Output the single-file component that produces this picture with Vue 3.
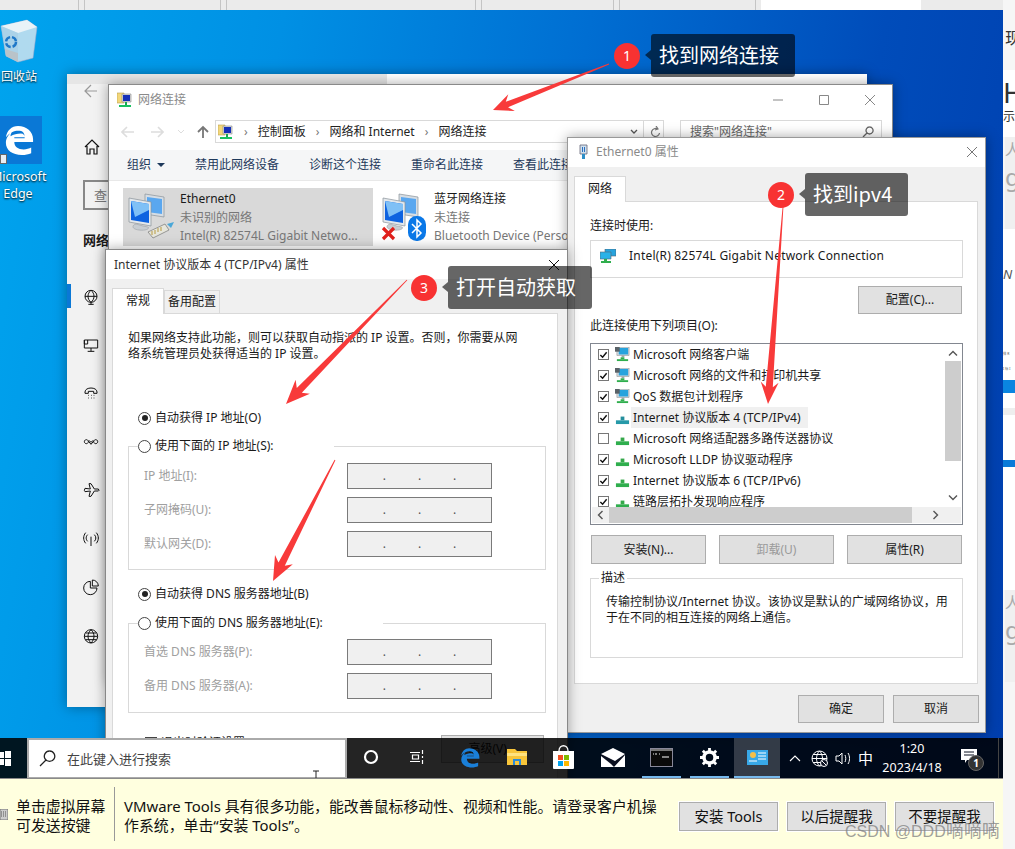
<script setup>
// 箭头：从尾到尖的多边形
function arrow(x1, y1, x2, y2, head = 20, half = 10, shaft = 3) {
  const len = Math.hypot(x2 - x1, y2 - y1);
  const ux = (x2 - x1) / len;
  const uy = (y2 - y1) / len;
  const nx = -uy;
  const ny = ux;
  const at = (back, side) => {
    const x = x2 - ux * back + nx * side;
    const y = y2 - uy * back + ny * side;
    return x.toFixed(1) + ',' + y.toFixed(1);
  };
  return [
    at(len, 0.4), at(head - 5, shaft), at(head, half), at(0, 0),
    at(head, -half), at(head - 5, -shaft), at(len, -0.4)
  ].join(' ');
}

const arrows = [
  arrow(609, 64, 493, 110, 20, 9, 3),
  arrow(783, 207, 768, 404, 22, 9, 3.5),
  arrow(407, 280, 286, 404, 24, 10, 3.5),
  arrow(335, 460, 273, 581, 24, 10, 3.5)
];

const tabMarks = [78, 84, 220, 226, 475, 481, 613, 619, 755];

const settingsIcons = [
  'M4 14a9 9 0 1 1 18 0a9 9 0 0 1-18 0M4 14h18M13 5c-6 5-6 13 0 18M13 5c6 5 6 13 0 18M13 23v3M9 26h8',
  'M3 6h20v12H3zM3 6v6h5v-6M13 18v5M8 23h10',
  'M4 12c0-8 18-8 18 0v2h-5v-3H9v3H4zM9 17h1M13 17h1M17 17h1M9 21h1M13 21h1M17 21h1',
  'M6 10a3 3 0 1 0 .1 0M20 10a3 3 0 1 0 .1 0M9 12l4 5l4-5M13 14l-3-3M13 14l3-3',
  'M4 11l8 1l-2-8h3l5 8h6l1 2l-1 1h-6l-5 8h-3l2-8l-8 1l-1-2z',
  'M13 10v14M8 7c-3 3-3 7 0 10M18 7c3 3 3 7 0 10M5 4c-4 5-4 11 0 16M21 4c4 5 4 11 0 16',
  'M12 5a10 10 0 1 0 10 10H12zM15 3v9h9a9 9 0 0 0-9-9',
  'M3 14a10 10 0 1 0 20 0a10 10 0 0 0-20 0M3 14h20M5 9h16M5 19h16M13 4c-6 6-6 14 0 20M13 4c6 6 6 14 0 20'
];

const toolItems = ['禁用此网络设备', '诊断这个连接', '重命名此连接', '查看此连接状态'];

const netItems = [
  { name: 'Microsoft 网络客户端', on: true, icon: 'pc' },
  { name: 'Microsoft 网络的文件和打印机共享', on: true, icon: 'pc' },
  { name: 'QoS 数据包计划程序', on: true, icon: 'pc' },
  { name: 'Internet 协议版本 4 (TCP/IPv4)', on: true, icon: 'teal', hi: true },
  { name: 'Microsoft 网络适配器多路传送器协议', on: false, icon: 'green' },
  { name: 'Microsoft LLDP 协议驱动程序', on: true, icon: 'green' },
  { name: 'Internet 协议版本 6 (TCP/IPv6)', on: true, icon: 'green' },
  { name: '链路层拓扑发现响应程序', on: true, icon: 'green' }
];

const ipFields = ['IP 地址(I):', '子网掩码(U):', '默认网关(D):'];
const dnsFields = ['首选 DNS 服务器(P):', '备用 DNS 服务器(A):'];
</script>

<template>
  <div class="screen">
    <svg class="defs" width="0" height="0">
      <symbol id="netfolder" viewBox="0 0 16 16">
        <path d="M0 1h7v10H0z" fill="#f3d77a" stroke="#b9a050" stroke-width=".6" />
        <path d="M5 2h9v8H5z" fill="#ddd" stroke="#888" stroke-width=".6" />
        <path d="M6 3h7v6H6z" fill="#1530b8" />
        <path d="M8 10h2v3H8z" fill="#18a850" />
        <path d="M2 13h12v2H2z" fill="#18c060" />
      </symbol>
      <symbol id="monitors" viewBox="0 0 45 42">
        <path d="M18 1l19 3v20l-19-3z" fill="#d6dde4" stroke="#8a9299" stroke-width=".7" />
        <path d="M20 4l15 2v15l-15-2z" fill="#5aa7ef" />
        <path d="M2 5l22 4v24L2 29z" fill="#e4e8ec" stroke="#8a9299" stroke-width=".7" />
        <path d="M4 8l18 3v19L4 27z" fill="#0e63e0" />
        <path d="M4 8l18 3v6L8 24z" fill="#7fc0f6" />
        <path d="M9 31c-4 1-5 5 3 6s11-2 9-3l-5-1z" fill="#c8cdd2" stroke="#9aa0a5" stroke-width=".6" />
      </symbol>
      <symbol id="edge-e" viewBox="0 0 32 32">
        <path fill="currentColor" d="M15 1c9 0 16 6 16 14v3H11c0 5 4 8 10 8c3 0 6-1 8-2v6c-3 1-6 2-10 2C9 32 2 27 2 19C2 14 5 10 9 7c-2 2-2 4-2 5c3-2 7-3 11-3c3 0 4 2 4 4H11c0 0 0 1 0 1h11v-1c0-5-2-7-7-7c-4 0-9 2-13 7C3 6 8 1 15 1z" />
      </symbol>
      <symbol id="nic-green" viewBox="0 0 16 16">
        <path d="M6 7h4v4H6z" fill="#35a84a" />
        <path d="M1 11h14v4H1z" fill="#2fae4d" />
      </symbol>
      <symbol id="nic-teal" viewBox="0 0 16 16">
        <path d="M6 7h4v4H6z" fill="#258f9d" />
        <path d="M1 11h14v4H1z" fill="#2699a8" />
      </symbol>
      <symbol id="nic-pc" viewBox="0 0 16 16">
        <path d="M2 0h13v9H2z" fill="#d8dde2" stroke="#777" stroke-width=".5" />
        <path d="M4 1h10v7H4z" fill="#27a3dd" />
        <path d="M0 0h5v5H0z" fill="#5a6268" />
        <path d="M7 9h3v2H7z" fill="#9aa" />
        <path d="M6 11h4v2H6z" fill="#2fae4d" />
        <path d="M2 13h12v2H2z" fill="#2fae4d" />
      </symbol>
    </svg>

    <div class="main">
      <div class="tabstrip">
        <i v-for="x in tabMarks" :key="x" class="tabmark" :style="{ left: x + 'px' }"></i>
        <div class="tabactive"></div>
      </div>

      <div class="desk">
        <!-- 桌面图标 -->
        <div class="deskicon bin">
          <svg width="38" height="44" viewBox="0 0 38 44">
            <path d="M1 7l26-6l10 7l-4 31l-15 4L6 37z" fill="#cfe4ee" fill-opacity=".85" stroke="#aac" stroke-width=".5" />
            <path d="M1 7l17 7l19-6l-10-7z" fill="#e9f3f8" />
            <path d="M18 14v29L6 37L1 7z" fill="#a8cfe6" fill-opacity=".7" />
            <path d="M5 30l13 4v9L6 37z" fill="#b9c3c9" />
            <circle cx="11" cy="23" r="5" fill="none" stroke="#1f78c8" stroke-width="2.4" stroke-dasharray="6 2" />
          </svg>
          <span>回收站</span>
        </div>
        <div class="deskicon edge">
          <div class="edgebox">
            <svg class="edgelogo" width="30" height="32"><use href="#edge-e" /></svg>
            <i class="shortcut"></i>
          </div>
          <span class="edgename">Microsoft<br />Edge</span>
        </div>

        <!-- 设置窗口 -->
        <section class="win settings">
          <div class="set-top">
            <svg class="set-back" width="14" height="14" viewBox="0 0 14 14"><path d="M13 7H1M7 1L1 7l6 6" fill="none" stroke="#999" stroke-width="1.2" /></svg>
          </div>
          <div class="set-side">
            <svg class="set-home" width="16" height="16" viewBox="0 0 16 16"><path d="M1 8l7-7l7 7M3 7v8h3v-5h4v5h3V7" fill="none" stroke="#111" stroke-width="1.2" /></svg>
            <div class="set-search">查</div>
            <div class="set-head">网络</div>
            <div class="set-icons">
              <div v-for="(d, i) in settingsIcons" :key="i" class="set-item" :class="{ on: i === 0 }">
                <svg width="18" height="18" viewBox="0 0 26 27"><path :d="d" fill="none" stroke="#111" stroke-width="1.5" /></svg>
              </div>
            </div>
          </div>
        </section>

        <!-- 网络连接窗口 -->
        <section class="win netconn">
          <header class="nc-title">
            <svg width="16" height="16"><use href="#netfolder" /></svg>
            <span class="nc-name">网络连接</span>
            <span class="caps">
              <svg width="12" height="12" viewBox="0 0 12 12"><path d="M1 6h10" stroke="#888" /></svg>
              <svg width="12" height="12" viewBox="0 0 12 12"><path d="M1.5 1.5h9v9h-9z" fill="none" stroke="#888" /></svg>
              <svg width="12" height="12" viewBox="0 0 12 12"><path d="M1 1l10 10M11 1L1 11" stroke="#888" /></svg>
            </span>
          </header>
          <div class="nc-nav">
            <span class="nc-arrows">
              <svg width="14" height="12" viewBox="0 0 14 12"><path d="M13 6H1M6 1L1 6l5 5" fill="none" stroke="#ddd" stroke-width="1.6" /></svg>
              <svg width="14" height="12" viewBox="0 0 14 12"><path d="M1 6h12M8 1l5 5l-5 5" fill="none" stroke="#ddd" stroke-width="1.6" /></svg>
              <svg class="nav-dd" width="8" height="6" viewBox="0 0 8 6"><path d="M1 1l3 3l3-3" fill="none" stroke="#ddd" /></svg>
              <svg class="nav-up" width="12" height="14" viewBox="0 0 12 14"><path d="M6 13V2M1 7l5-5l5 5" fill="none" stroke="#777" stroke-width="1.8" /></svg>
            </span>
            <div class="nc-addr">
              <svg width="16" height="16"><use href="#netfolder" /></svg>
              <span class="crumb">›</span><span>控制面板</span>
              <span class="crumb">›</span><span>网络和 Internet</span>
              <span class="crumb">›</span><span>网络连接</span>
              <span class="addr-end">
                <svg width="8" height="6" viewBox="0 0 8 6"><path d="M1 1l3 3l3-3" fill="none" stroke="#555" stroke-width="1.3" /></svg>
                <i class="addr-sep"></i>
                <svg width="11" height="12" viewBox="0 0 11 12"><path d="M9.5 7a4 4 0 1 1-2-4M6 0l2 3l-3 1" fill="none" stroke="#777" stroke-width="1.2" /></svg>
              </span>
            </div>
            <div class="nc-find">
              <span>搜索"网络连接"</span>
              <svg width="12" height="12" viewBox="0 0 12 12"><path d="M7.5 1a3.5 3.5 0 1 0 .1 0M5 7l-4 4" fill="none" stroke="#666" stroke-width="1.3" /></svg>
            </div>
          </div>
          <div class="nc-tools">
            <span class="org">组织<i class="caret"></i></span>
            <span v-for="t in toolItems" :key="t">{{ t }}</span>
          </div>
          <div class="nc-list">
            <div class="conn sel">
              <span class="conn-icon">
                <svg width="45" height="42"><use href="#monitors" /></svg>
                <svg class="plug" width="28" height="18" viewBox="0 0 28 18">
                  <path d="M1 11l17-8l4 6l-16 8z" fill="#e6e6dc" stroke="#777" stroke-width=".7" />
                  <path d="M20 3l7-2l-3 6z" fill="#49a7d8" />
                  <path d="M5 10v4M8 9v4M11 7v4M14 6v4" stroke="#b89a40" />
                </svg>
              </span>
              <div class="conn-text">
                <b>Ethernet0</b>
                <span>未识别的网络</span>
                <span>Intel(R) 82574L Gigabit Netwo...</span>
              </div>
            </div>
            <div class="conn">
              <span class="conn-icon">
                <svg width="45" height="42"><use href="#monitors" /></svg>
                <svg class="xmark" width="15" height="15" viewBox="0 0 15 15"><path d="M2 2l11 11M13 2L2 13" stroke="#e0201c" stroke-width="3.2" /></svg>
                <svg class="bt" width="18" height="25" viewBox="0 0 18 25">
                  <rect width="18" height="25" rx="8.5" fill="#0a78e8" />
                  <path d="M4 8l9 9l-4 4V4l4 4l-9 9" fill="none" stroke="#fff" stroke-width="1.5" />
                </svg>
              </span>
              <div class="conn-text">
                <b>蓝牙网络连接</b>
                <span>未连接</span>
                <span>Bluetooth Device (Personal Area Network)</span>
              </div>
            </div>
          </div>
        </section>

        <!-- Ethernet0 属性 -->
        <section class="win ethdlg">
          <header class="dlg-title">
            <svg width="11" height="16" viewBox="0 0 11 16">
              <path d="M2 1h7v9H2z" fill="#cfe0ee" stroke="#667" stroke-width=".8" />
              <path d="M4 3h1v5H4zM6 3h1v5H6z" fill="#2a6fc0" />
              <path d="M4 10h3v5H4z" fill="#2f8fc8" />
            </svg>
            <span class="grey">Ethernet0 属性</span>
            <svg class="dlg-x" width="12" height="12" viewBox="0 0 12 12"><path d="M1 1l10 10M11 1L1 11" stroke="#777" /></svg>
          </header>
          <div class="dlg-body">
            <div class="tabs"><span class="tab on eth-tab">网络</span></div>
            <div class="panel eth-panel">
              <div class="label">连接时使用:</div>
              <div class="adapter">
                <svg width="16" height="15" viewBox="0 0 16 15">
                  <path d="M5 0h11v7H5z" fill="#27a3dd" stroke="#567" stroke-width=".6" />
                  <path d="M0 3h11v7H0z" fill="#2ab2e8" stroke="#567" stroke-width=".6" />
                  <path d="M4 10h3v2H4z" fill="#2fae4d" />
                  <path d="M1 12h10v2H1z" fill="#2fae4d" />
                </svg>
                <span>Intel(R) 82574L Gigabit Network Connection</span>
              </div>
              <div class="cfg-row"><button class="btn cfg">配置(C)...</button></div>
              <div class="label list-label">此连接使用下列项目(O):</div>
              <div class="listbox">
                <div class="rows">
                  <div v-for="item in netItems" :key="item.name" class="row">
                    <span class="check">
                      <svg v-if="item.on" width="10" height="10" viewBox="0 0 10 10"><path d="M1.5 5l2.5 2.5L8.5 2" fill="none" stroke="#111" stroke-width="1.6" /></svg>
                    </span>
                    <svg width="15" height="15"><use :href="'#nic-' + item.icon" /></svg>
                    <span class="row-name" :class="{ hi: item.hi }">{{ item.name }}</span>
                  </div>
                </div>
                <div class="vscroll">
                  <svg width="10" height="7" viewBox="0 0 10 7"><path d="M1 5.5l4-4l4 4" fill="none" stroke="#555" stroke-width="1.4" /></svg>
                  <i class="vthumb"></i>
                  <svg class="vdown" width="10" height="7" viewBox="0 0 10 7"><path d="M1 1.5l4 4l4-4" fill="none" stroke="#555" stroke-width="1.4" /></svg>
                </div>
                <div class="hscroll">
                  <svg width="7" height="10" viewBox="0 0 7 10"><path d="M5.5 1l-4 4l4 4" fill="none" stroke="#555" stroke-width="1.4" /></svg>
                  <i class="hthumb"></i>
                  <svg width="7" height="10" viewBox="0 0 7 10"><path d="M1.5 1l4 4l-4 4" fill="none" stroke="#555" stroke-width="1.4" /></svg>
                </div>
              </div>
              <div class="act-row">
                <button class="btn act">安装(N)...</button>
                <button class="btn act off">卸载(U)</button>
                <button class="btn act">属性(R)</button>
              </div>
              <fieldset class="desc">
                <legend>描述</legend>
                <p>传输控制协议/Internet 协议。该协议是默认的广域网络协议，用<br />于在不同的相互连接的网络上通信。</p>
              </fieldset>
            </div>
            <div class="dlg-foot">
              <button class="btn foot">确定</button>
              <button class="btn foot">取消</button>
            </div>
          </div>
        </section>

        <!-- IPv4 属性 -->
        <section class="win ipv4">
          <header class="dlg-title">
            <span class="ipv4-name">Internet 协议版本 4 (TCP/IPv4) 属性</span>
            <svg class="dlg-x" width="12" height="12" viewBox="0 0 12 12"><path d="M1 1l10 10M11 1L1 11" stroke="#111" /></svg>
          </header>
          <div class="dlg-body ipv4-body">
            <div class="tabs">
              <span class="tab on gen-tab">常规</span>
              <span class="tab alt-tab">备用配置</span>
            </div>
            <div class="panel ip-panel">
              <p class="intro">如果网络支持此功能，则可以获取自动指派的 IP 设置。否则，你需要从网<br />络系统管理员处获得适当的 IP 设置。</p>
              <div class="radio first"><i class="dot on"></i>自动获得 IP 地址(O)</div>
              <fieldset class="grp ip-grp">
                <legend class="radio leg"><i class="dot"></i>使用下面的 IP 地址(S):</legend>
                <div v-for="f in ipFields" :key="f" class="field-row">
                  <span>{{ f }}</span>
                  <div class="ipbox"><span>.</span><span>.</span><span>.</span></div>
                </div>
              </fieldset>
              <div class="radio second"><i class="dot on"></i>自动获得 DNS 服务器地址(B)</div>
              <fieldset class="grp dns-grp">
                <legend class="radio leg"><i class="dot"></i>使用下面的 DNS 服务器地址(E):</legend>
                <div v-for="f in dnsFields" :key="f" class="field-row">
                  <span>{{ f }}</span>
                  <div class="ipbox"><span>.</span><span>.</span><span>.</span></div>
                </div>
              </fieldset>
              <div class="ip-foot">
                <span class="verify"><i class="box"></i>退出时验证设置</span>
                <button class="btn adv">高级(V)...</button>
              </div>
            </div>
          </div>
        </section>

        <!-- 任务栏 -->
        <footer class="taskbar">
          <svg class="winlogo" width="11" height="15" viewBox="0 0 11 15"><path d="M0 1h4v6H0zM5 0h6v7H5zM0 8h4v6H0zM5 8h6v7H5z" fill="#fff" /></svg>
          <div class="tb-search">
            <svg width="17" height="17" viewBox="0 0 17 17"><path d="M10.5 1a5.2 5.2 0 1 0 .1 0M7 10l-6 6" fill="none" stroke="#222" stroke-width="1.3" /></svg>
            <span>在此键入进行搜索</span>
            <svg class="ibeam" width="8" height="12" viewBox="0 0 8 12"><path d="M1 1h6M4 1v10" stroke="#222" /></svg>
          </div>
          <div class="tb-apps">
            <span class="app a-cortana"><svg width="16" height="16" viewBox="0 0 16 16"><circle cx="8" cy="8" r="6" fill="none" stroke="#fff" stroke-width="2.2" /></svg></span>
            <span class="app a-view"><svg width="16" height="16" viewBox="0 0 16 16"><path d="M0 3.5h10M0 12.5h10M2.5 6h6v4h-6zM12.5 1v4M12.5 7v2M12.5 11v4" fill="none" stroke="#fff" stroke-width="1.2" /></svg></span>
            <span class="app a-edge"><svg width="20" height="21"><use href="#edge-e" /></svg></span>
            <span class="app a-folder">
              <svg width="20" height="18" viewBox="0 0 20 18">
                <path d="M0 1h8l2 2h10v14H0z" fill="#f8c53a" />
                <path d="M0 5h20v3H0z" fill="#ffe27f" />
                <path d="M6 11h8v6h-2v-4H8v4H6z" fill="#2a8ad8" />
              </svg>
            </span>
            <span class="app a-store">
              <svg width="23" height="24" viewBox="0 0 23 24">
                <path d="M7 6c0-7 9-7 9 0" fill="none" stroke="#fff" stroke-width="1.3" />
                <path d="M1 6h21v17a1 1 0 0 1-1 1H2a1 1 0 0 1-1-1z" fill="#fff" />
                <path d="M6 10h5v5H6z" fill="#f25022" /><path d="M12 10h5v5h-5z" fill="#7fba00" />
                <path d="M6 16h5v5H6z" fill="#00a4ef" /><path d="M12 16h5v5h-5z" fill="#ffb900" />
              </svg>
            </span>
            <span class="app a-mail">
              <svg width="24" height="19" viewBox="0 0 24 19">
                <path d="M0 6L12 0l12 6v13H0z" fill="#fff" />
                <path d="M0 6l14 7l10-7v1L13 19l-3-3L0 8z" fill="#0a1020" />
              </svg>
            </span>
            <span class="app a-cmd run">
              <svg width="23" height="19" viewBox="0 0 23 19">
                <rect x=".5" y=".5" width="22" height="18" fill="#0a0a0a" stroke="#889" />
                <path d="M1 1h21v2H1z" fill="#777" />
                <path d="M3 6h1M5 6h2M9 6h1" stroke="#eee" /><path d="M12 9h7" stroke="#fff" />
              </svg>
            </span>
            <span class="app a-gear run">
              <svg width="19" height="19" viewBox="0 0 19 19">
                <circle cx="9.5" cy="9.5" r="5.5" fill="none" stroke="#fff" stroke-width="3.5" />
                <path d="M9.5 0v4M9.5 15v4M0 9.5h4M15 9.500h4M2.8 2.800l2.800 2.800M13.400 13.400l2.800 2.800M2.800 16.200l2.800-2.800M13.400 5.600l2.800-2.800" stroke="#fff" stroke-width="2.8" />
              </svg>
            </span>
            <span class="app a-panel run active">
              <svg width="21" height="15" viewBox="0 0 21 15">
                <rect width="21" height="15" fill="#38a8e8" />
                <circle cx="6" cy="5" r="3" fill="#f4c04a" />
                <path d="M11 3h8M11 6h8M11 9h8" stroke="#fff" /><path d="M2 11h8" stroke="#fff" />
              </svg>
            </span>
          </div>
          <div class="tray">
            <svg class="t-up" width="12" height="8" viewBox="0 0 12 8"><path d="M1 7l5-5l5 5" fill="none" stroke="#fff" stroke-width="1.1" /></svg>
            <svg class="t-globe" width="17" height="17" viewBox="0 0 17 17">
              <path d="M1 8.5a7.5 7.5 0 1 0 15 0a7.5 7.5 0 0 0-15 0M1 8.5h15M2 4.5h13M2 12.500h13M8.500 1c-4 4-4 11 0 15M8.500 1c4 4 4 11 0 15" fill="none" stroke="#fff" />
              <circle cx="13" cy="13" r="3.500" fill="#0a1020" stroke="#fff" /><path d="M11 11l4 4" stroke="#fff" />
            </svg>
            <svg class="t-vol" width="17" height="15" viewBox="0 0 17 15"><path d="M1 5h3l3-3v11l-3-3H1zM10 4c1 2 1 5 0 7M13 2c2 3 2 8 0 11" fill="none" stroke="#fff" /></svg>
            <span class="ime">中</span>
            <div class="clock"><span>1:20</span><span>2023/4/18</span></div>
            <span class="notify">
              <svg width="16" height="14" viewBox="0 0 16 14"><path d="M0 0h16v11H6l-2 3v-3H0z" fill="#fff" /><path d="M3 3h10M3 6h10" stroke="#0a1020" /></svg>
              <b class="notify-n">1</b>
            </span>
            <i class="show-desk"></i>
          </div>
        </footer>
      </div>

      <!-- VMware 提示条 -->
      <div class="vmbar">
        <svg class="vm-key" width="8" height="11" viewBox="0 0 8 11"><path d="M0 0h8v11H0z" fill="#ccc" stroke="#777" /><path d="M1 3h6M1 5h6M1 7h6" stroke="#555" stroke-dasharray="1 1" /></svg>
        <div class="vm-left">单击虚拟屏幕<br />可发送按键</div>
        <i class="vm-sep"></i>
        <div class="vm-msg">VMware Tools 具有很多功能，能改善鼠标移动性、视频和性能。请登录客户机操<br />作系统，单击“安装 Tools”。</div>
        <div class="vm-btns">
          <button class="vm-btn">安装 Tools</button>
          <button class="vm-btn">以后提醒我</button>
          <button class="vm-btn">不要提醒我</button>
        </div>
      </div>
    </div>

    <!-- 右边露出的另一页面 -->
    <aside class="sliver">
      <div class="sl-a">现</div>
      <div class="sl-b">H</div>
      <div class="sl-c">示题</div>
      <div class="sl-d"><span>人目</span><em>g</em></div>
      <div class="sl-e">
        <i class="sl-n">N</i>
        <div class="sl-thumb">
          <small>排 R</small>
          <small>I 标 I</small>
          <i class="sl-blue"></i>
          <div class="sl-lines"></div>
          <i class="sl-blue2"></i>
        </div>
      </div>
      <div class="sl-d sl-d2"><span>人目</span><em>g</em></div>
    </aside>

    <!-- 标注 -->
    <svg class="marks" width="1015" height="849">
      <polygon v-for="(p, i) in arrows" :key="i" :points="p" fill="#f83a3a" />
    </svg>
    <div class="note n1"><b class="badge">1</b><span class="tip">找到网络连接</span></div>
    <div class="note n2"><b class="badge">2</b><span class="tip">找到ipv4</span></div>
    <div class="note n3"><b class="badge">3</b><span class="tip">打开自动获取</span></div>

    <div class="watermark">CSDN @DDD<span>嘀嘀嘀</span></div>
  </div>
</template>

<style>
html,
body {
  margin: 0;
  overflow: hidden;
  background: #f6f6f6;
}
</style>

<style scoped>
.screen {
  position: relative;
  width: 1015px;
  height: 849px;
  display: flex;
  overflow: hidden;
  font-family: "Noto Sans", "Noto Sans CJK SC", sans-serif;
  font-size: 12px;
  line-height: 16px;
  color: #1a1a1a;
}

.defs {
  position: absolute;
}

.main {
  width: 1003px;
  display: flex;
  flex-direction: column;
}

.tabstrip {
  position: relative;
  height: 10px;
  flex: none;
  background: #ebebeb;
}

.tabmark {
  position: absolute;
  top: 0;
  width: 1px;
  height: 10px;
  background: #c4c4c4;
}

.tabactive {
  position: absolute;
  left: 761px;
  width: 160px;
  height: 10px;
  background: #fff;
}

.desk {
  position: relative;
  height: 768px;
  flex: none;
  display: flex;
  flex-direction: column;
  justify-content: flex-end;
  overflow: hidden;
  background: linear-gradient(100deg, #00a4ee 0%, #0090e4 25%, #006ed2 52%, #004cba 78%, #003eae 100%);
}

/* 桌面图标 */
.deskicon {
  position: absolute;
  color: #fff;
  text-shadow: 0 1px 2px #000;
  font-size: 12px;
  text-align: center;
}

.bin {
  left: 0;
  top: 9px;
  width: 38px;
}

.bin span {
  display: block;
  margin-top: 2px;
  font-size: 12px;
  white-space: nowrap;
}

.edge {
  left: -9px;
  top: 106px;
  width: 54px;
}

.edgebox {
  position: relative;
  width: 42px;
  height: 48px;
  margin-left: 9px;
  background: #0a78d6;
  color: #fff;
  display: flex;
  align-items: center;
  justify-content: center;
}

.edgelogo {
  margin-left: -4px;
}

.shortcut {
  position: absolute;
  left: 0;
  bottom: 0;
  width: 7px;
  height: 10px;
  background: #e8eef4;
  border: 1px solid #666;
  box-sizing: border-box;
}

.edgename {
  display: block;
  margin-top: 4px;
  font-size: 12.5px;
  line-height: 17px;
  white-space: nowrap;
}

/* 窗口 */
.win {
  position: absolute;
  box-sizing: border-box;
  box-shadow: 0 0 12px rgba(0, 0, 0, 0.35);
}

.settings {
  left: 67px;
  top: 64px;
  width: 800px;
  height: 633px;
  background: #f2f2f2;
}

.set-top {
  height: 36px;
  padding: 10px 0 0 17px;
  box-sizing: border-box;
  background: linear-gradient(90deg, #e6e6e6 320px, #fff 320px);
  background-size: 100% 10px;
  background-repeat: no-repeat;
}

.set-side {
  display: flex;
  flex-direction: column;
}

.set-home {
  margin: 29px 0 0 17px;
}

.set-search {
  margin: 25px 0 0 16px;
  width: 60px;
  height: 30px;
  box-sizing: border-box;
  border: 2px solid #888;
  padding: 5px 9px;
  color: #777;
  font-size: 13px;
  line-height: 16px;
}

.set-head {
  margin: 22px 0 0 16px;
  font-weight: 700;
  font-size: 13px;
}

.set-icons {
  margin-top: 36px;
  display: flex;
  flex-direction: column;
  gap: 24.5px;
}

.set-item {
  height: 24px;
  padding-left: 11px;
  border-left: 4px solid transparent;
  display: flex;
  align-items: center;
}

.set-item.on {
  border-left-color: #0a78d6;
}

.netconn {
  left: 108px;
  top: 74px;
  width: 785px;
  height: 600px;
  background: #fff;
  border: 1px solid #8a8a8a;
}

.nc-title {
  height: 29px;
  display: flex;
  align-items: center;
  padding: 0 16px 0 8px;
  gap: 5px;
}

.nc-name {
  color: #8a8a8a;
  font-size: 12px;
}

.caps {
  margin-left: auto;
  display: flex;
  gap: 34px;
}

.nc-nav {
  height: 36px;
  display: flex;
  align-items: flex-start;
  padding-top: 6px;
  box-sizing: border-box;
}

.nc-arrows {
  width: 106px;
  height: 23px;
  padding-left: 12px;
  box-sizing: border-box;
  display: flex;
  align-items: center;
  gap: 15px;
}

.nav-dd {
  margin-left: -2px;
}

.nav-up {
  margin-left: -3px;
}

.nc-addr {
  width: 449px;
  height: 23px;
  box-sizing: border-box;
  border: 1px solid #d9d9d9;
  display: flex;
  align-items: center;
  gap: 8px;
  padding: 0 2px;
  color: #222;
}

.crumb {
  color: #777;
  margin: 0 2px;
}

.addr-end {
  margin-left: auto;
  display: flex;
  align-items: center;
  gap: 4px;
}

.addr-sep {
  width: 1px;
  height: 21px;
  background: #d9d9d9;
  margin: 0 2px 0 1px;
}

.nc-find {
  width: 202px;
  height: 23px;
  margin-left: 16px;
  box-sizing: border-box;
  border: 1px solid #d9d9d9;
  display: flex;
  align-items: center;
  justify-content: space-between;
  padding: 0 7px 0 9px;
  color: #666;
}

.nc-tools {
  height: 31px;
  background: #f5f6f7;
  border-bottom: 1px solid #e8e8e8;
  display: flex;
  align-items: center;
  color: #1e395b;
  box-sizing: border-box;
  padding-left: 18px;
}

.org {
  width: 68px;
  display: flex;
  align-items: center;
  gap: 6px;
}

.nc-tools span:nth-child(2) {
  width: 114px;
}

.nc-tools span:nth-child(3),
.nc-tools span:nth-child(4) {
  width: 102px;
}

.caret {
  width: 0;
  height: 0;
  border: 4px solid transparent;
  border-top: 4px solid #1e395b;
  border-bottom: 0;
}

.nc-list {
  display: flex;
  margin-top: 7px;
  padding-left: 14px;
}

.conn {
  width: 250px;
  height: 58px;
  display: flex;
  gap: 7px;
  padding-left: 4px;
  box-sizing: border-box;
}

.conn.sel {
  background: #d9d9d9;
}

.conn + .conn {
  margin-left: 4px;
  width: 400px;
}

.conn-icon {
  position: relative;
  width: 46px;
  padding-top: 5px;
}

.plug {
  position: absolute;
  left: 20px;
  top: 33px;
}

.xmark {
  position: absolute;
  left: 0;
  top: 38px;
}

.bt {
  position: absolute;
  left: 27px;
  top: 28px;
}

.conn-text {
  display: flex;
  flex-direction: column;
  padding-top: 3px;
  gap: 2.5px;
  color: #777;
  white-space: nowrap;
}

.conn-text b {
  font-weight: 400;
  color: #1a1a1a;
}

.ethdlg {
  left: 567px;
  top: 127px;
  width: 419px;
  height: 596px;
  background: #f0f0f0;
  border: 1px solid #999;
}

.dlg-title {
  height: 29px;
  display: flex;
  align-items: center;
  gap: 7px;
  padding: 0 10px;
  background: #fff;
}

.ethdlg .dlg-title {
  box-sizing: border-box;
  padding-bottom: 2px;
}

.grey {
  color: #8a8a8a;
}

.dlg-x {
  margin-left: auto;
  margin-right: -3px;
}

.dlg-body {
  padding: 9px 8px 0 6px;
}

.tabs {
  display: flex;
  align-items: flex-end;
  height: 25px;
}

.tab {
  box-sizing: border-box;
  border: 1px solid #d9d9d9;
  border-bottom: 0;
  text-align: center;
}

.tab.on {
  background: #fff;
  height: 26px;
  position: relative;
  padding-top: 4px;
  margin-bottom: -1px;
}

.eth-tab {
  width: 52px;
}

.panel {
  box-sizing: border-box;
  border: 1px solid #d9d9d9;
  background: #fff;
}

.eth-panel {
  height: 483px;
  width: 404px;
  padding: 15px 14px 0 15px;
}

.label {
  line-height: 17px;
}

.adapter {
  margin-top: 6px;
  height: 38px;
  box-sizing: border-box;
  border: 1px solid #d9d9d9;
  padding: 0 0 6px 9px;
  display: flex;
  align-items: center;
  gap: 13px;
  letter-spacing: 0.2px;
}

.cfg-row {
  display: flex;
  justify-content: flex-end;
  margin-top: 8px;
}

.btn {
  font: inherit;
  color: #1a1a1a;
  background: #e1e1e1;
  border: 1px solid #adadad;
  padding: 0;
}

.cfg {
  width: 104px;
  height: 28px;
  margin-right: 1px;
}

.list-label {
  margin-top: 3px;
}

.listbox {
  margin-top: 9px;
  height: 182px;
  box-sizing: border-box;
  border: 1px solid #828790;
  display: grid;
  grid-template-columns: 1fr 16px;
  grid-template-rows: 1fr 16px;
  padding: 0 1px 1px 1px;
}

.rows {
  overflow: hidden;
}

.row {
  height: 21px;
  display: flex;
  align-items: center;
  padding-left: 6px;
  white-space: nowrap;
}

.check {
  width: 11px;
  height: 11px;
  box-sizing: border-box;
  border: 1px solid #777;
  background: #fff;
  margin-right: 6px;
  display: flex;
  align-items: center;
  justify-content: center;
  flex: none;
}

.row-name {
  padding: 2px 7px 2px 2px;
  margin-left: 1px;
  line-height: 17px;
}

.row-name.hi {
  background: #f0f0f0;
}

.vscroll {
  display: flex;
  flex-direction: column;
  align-items: center;
  padding-top: 6px;
  background: #fff;
}

.vthumb {
  width: 16px;
  height: 100px;
  background: #cdcdcd;
  margin-top: 4px;
}

.vdown {
  margin-top: auto;
  margin-bottom: 6px;
}

.hscroll {
  grid-column: 1 / 3;
  background: #f0f0f0;
  display: flex;
  align-items: center;
  padding: 0 22px 0 5px;
}

.hthumb {
  width: 303px;
  height: 16px;
  margin: 0 auto 0 5px;
  background: #cdcdcd;
}

.act-row {
  margin-top: 10px;
  margin-left: 1px;
  display: flex;
  gap: 13px;
}

.act {
  width: 115px;
  height: 29px;
}

.act.off {
  color: #9a9a9a;
  background: #e0e0e0;
}

.desc {
  margin: 6px 0 0;
  padding: 8px 0 0 15px;
  height: 88px;
  box-sizing: border-box;
  border: 1px solid #d9d9d9;
}

.desc legend {
  margin-left: -7px;
  padding: 0 2px;
  line-height: 16px;
}

.desc p {
  margin: 0;
  line-height: 16px;
  white-space: nowrap;
}

.dlg-foot {
  display: flex;
  justify-content: flex-end;
  gap: 9px;
  margin-top: 11px;
  margin-right: -2px;
}

.foot {
  width: 86px;
  height: 28px;
}

.ipv4 {
  left: 105px;
  top: 239px;
  width: 463px;
  height: 540px;
  background: #f0f0f0;
  border: 1px solid #888;
  border-bottom: 0;
}

.ipv4-name {
  margin-left: -2px;
  color: #333;
}

.ipv4-body {
  padding-right: 9px;
}

.gen-tab {
  width: 52px;
}

.alt-tab {
  width: 56px;
  height: 23px;
  padding-top: 3px;
}

.ip-panel {
  padding: 16px 12px 0 15px;
  height: 470px;
}

.intro {
  margin: 0;
  white-space: nowrap;
}

.radio {
  display: flex;
  align-items: center;
  height: 18px;
  line-height: 18px;
  gap: 4px;
  white-space: nowrap;
}

.dot {
  position: relative;
  width: 13px;
  height: 13px;
  box-sizing: border-box;
  border: 1px solid #444;
  border-radius: 50%;
  background: #fff;
  flex: none;
}

.dot.on::after {
  content: "";
  position: absolute;
  left: 2.5px;
  top: 2.5px;
  width: 6px;
  height: 6px;
  border-radius: 50%;
  background: #222;
}

.first,
.second {
  padding-left: 10px;
}

.first {
  margin-top: 47px;
}

.grp {
  margin: 10px 0 0 0;
  box-sizing: border-box;
  border: 1px solid #d9d9d9;
  width: 418px;
}

.ip-grp {
  height: 133px;
  padding: 8px 0 0 15px;
}

.dns-grp {
  height: 99px;
  margin-top: 11px;
  padding: 7px 0 0 15px;
}

.leg {
  padding: 0 60px 0 0;
  margin-left: -6px;
  background: #fff;
}

.second {
  margin-top: 15px;
}

.field-row {
  display: grid;
  grid-template-columns: 203px 145px;
  align-items: center;
  margin-bottom: 8px;
  color: #a0a0a0;
}

.ipbox {
  box-sizing: border-box;
  height: 26px;
  border: 1px solid #7a7a7a;
  background: #f0f0f0;
  display: flex;
  justify-content: center;
  gap: 32px;
  color: #555;
  line-height: 24px;
}

.ip-foot {
  display: flex;
  justify-content: space-between;
  align-items: flex-start;
  margin-top: 22px;
  padding: 0 1px 0 17px;
}

.verify {
  display: flex;
  gap: 4px;
  align-items: center;
}

.box {
  width: 12px;
  height: 12px;
  box-sizing: border-box;
  border: 1px solid #444;
  background: #fff;
}

.adv {
  width: 103px;
  height: 28px;
}

/* 任务栏 */
.taskbar {
  position: relative;
  z-index: 5;
  height: 40px;
  flex: none;
  display: flex;
  align-items: center;
  background: rgba(0, 0, 0, 0.86);
  color: #fff;
}

.winlogo {
  width: 27px;
  flex: none;
  padding-right: 16px;
  box-sizing: border-box;
}

.tb-search {
  position: relative;
  width: 320px;
  height: 40px;
  box-sizing: border-box;
  border: 2px solid #aaa;
  border-bottom-width: 1px;
  background: #fff;
  color: #444;
  font-size: 13px;
  display: flex;
  align-items: center;
  gap: 11px;
  padding-left: 10px;
}

.ibeam {
  position: absolute;
  left: 283px;
  top: 30px;
}

.tb-apps {
  display: flex;
  height: 40px;
}

.app {
  display: flex;
  align-items: center;
  justify-content: center;
  height: 40px;
  box-sizing: border-box;
  border-bottom: 2px solid transparent;
}

.a-cortana { width: 48px; }
.a-view { width: 46px; }
.a-edge { width: 58px; color: #1a7fd8; }
.a-folder { width: 36px; }
.a-store { width: 56px; }
.a-mail { width: 44px; }
.a-cmd { width: 39px; margin-left: 7px; }
.a-gear { width: 39px; margin-left: 9px; }
.a-panel { width: 46px; margin-left: 5px; }

.run {
  border-bottom-color: #76b9ed;
}

.active {
  background: rgba(255, 255, 255, 0.2);
}

.tray {
  display: flex;
  align-items: center;
  flex: 1;
  padding-left: 9px;
}

.t-globe {
  margin-left: 10px;
}

.t-vol {
  margin-left: 7px;
}

.ime {
  font-size: 15px;
  margin-left: 6px;
}

.clock {
  display: flex;
  flex-direction: column;
  align-items: center;
  width: 72px;
  margin-left: 3px;
  line-height: 19px;
  font-size: 12.5px;
}

.notify {
  position: relative;
  margin-left: 13px;
}

.notify-n {
  position: absolute;
  left: 7px;
  top: 6px;
  width: 16px;
  height: 16px;
  border-radius: 50%;
  background: #333;
  border: 1px solid #666;
  box-sizing: border-box;
  font-size: 10px;
  line-height: 14px;
  text-align: center;
}

.show-desk {
  margin-left: auto;
  margin-right: 4px;
  width: 1px;
  height: 40px;
  background: #444;
}

/* VMware 提示条 */
.vmbar {
  position: relative;
  z-index: 6;
  height: 71px;
  flex: none;
  background: #ffffdf;
  border-top: 1px solid #8a8a8a;
  box-sizing: border-box;
  display: flex;
  align-items: center;
  color: #111;
  font-size: 14.9px;
  line-height: 19px;
}

.vm-key {
  flex: none;
  margin-right: 8px;
}

.vm-left {
  width: 98px;
  flex: none;
  margin-top: 3px;
  white-space: nowrap;
}

.vm-sep {
  width: 1px;
  height: 54px;
  background: #999;
  flex: none;
}

.vm-msg {
  margin: 3px 0 0 9px;
  width: 555px;
  flex: none;
  white-space: nowrap;
}

.vm-btns {
  display: flex;
  gap: 9px;
  margin-top: 4px;
}

.vm-btn {
  width: 99px;
  height: 29px;
  padding: 0;
  font: inherit;
  font-size: 14.5px;
  color: #111;
  background: #e1e1e1;
  border: 1px solid #adadad;
  box-shadow: 0 0 0 1px #fff;
}

/* 右边露出的页面 */
.sliver {
  width: 12px;
  height: 849px;
  overflow: hidden;
  flex: none;
  background: #f6f6f6;
  color: #333;
  white-space: nowrap;
}

.sl-a {
  height: 70px;
  padding-top: 30px;
  box-sizing: border-box;
  font-size: 16px;
  margin-left: 2px;
}

.sl-b {
  height: 37px;
  background: #fff;
  font-size: 28px;
  line-height: 44px;
  overflow: hidden;
}

.sl-c {
  height: 30px;
  background: #fff;
  font-size: 12px;
  line-height: 20px;
}

.sl-d {
  height: 92px;
  margin-left: 2px;
  background: #f0f0f0;
  color: #aaa;
  font-size: 15px;
  padding-top: 4px;
  box-sizing: border-box;
}

.sl-d span {
  display: block;
}

.sl-d em {
  display: block;
  font-style: normal;
  font-size: 24px;
  line-height: 40px;
}

.sl-e {
  height: 361px;
  background: #fff;
  padding-top: 36px;
  box-sizing: border-box;
}

.sl-n {
  display: block;
  font-size: 13px;
  color: #555;
  line-height: 18px;
}

.sl-thumb {
  margin-top: 68px;
  font-size: 4px;
  line-height: 6px;
  color: #555;
}

.sl-thumb small {
  display: block;
  height: 14.5px;
}

.sl-blue {
  display: block;
  height: 13px;
  background: #0a85e0;
}

.sl-lines {
  margin-top: 15px;
  height: 52px;
  box-sizing: border-box;
  border-top: 7px solid #eee;
}

.sl-blue2 {
  display: block;
  height: 7px;
  background: #0a7ad8;
}

/* 标注 */
.marks {
  position: absolute;
  left: 0;
  top: 0;
  pointer-events: none;
  z-index: 10;
}

.note {
  position: absolute;
  z-index: 11;
  display: flex;
  align-items: center;
  height: 43px;
  font-family: "Noto Sans CJK SC", sans-serif;
}

.n1 {
  left: 614px;
  top: 34px;
}

.n2 {
  left: 768px;
  top: 173px;
}

.n3 {
  left: 411px;
  top: 266px;
}

.badge {
  width: 26px;
  height: 26px;
  margin-right: 11px;
  border-radius: 50%;
  background: #f83232;
  color: #fff;
  font-weight: 400;
  font-size: 14px;
  line-height: 26px;
  text-align: center;
  font-family: "Noto Sans", sans-serif;
}

.tip {
  position: relative;
  height: 43px;
  box-sizing: border-box;
  padding: 0 16px 0 8px;
  border-radius: 3px;
  background: rgba(0, 0, 0, 0.6);
  color: #fff;
  font-size: 20px;
  line-height: 42px;
  white-space: nowrap;
}

.tip::before {
  content: "";
  position: absolute;
  left: -6px;
  top: 16px;
  border: 5px solid transparent;
  border-left: 0;
  border-right: 6px solid rgba(0, 0, 0, 0.6);
}

.watermark {
  position: absolute;
  z-index: 12;
  left: 845px;
  top: 820px;
  color: rgba(130, 130, 130, 0.75);
  font-family: "Liberation Sans", "Noto Sans CJK SC", sans-serif;
  font-size: 16px;
  line-height: 22px;
  white-space: nowrap;
}

.watermark span {
  font-size: 18px;
}
</style>
